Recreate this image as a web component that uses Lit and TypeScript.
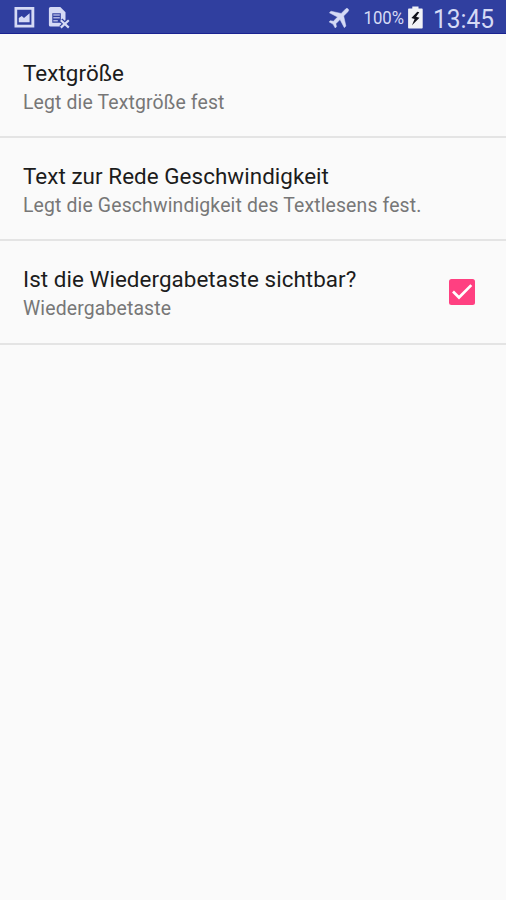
import { LitElement, html, css, svg } from "lit";
import { customElement, property } from "lit/decorators.js";

@customElement("status-bar")
class StatusBar extends LitElement {
  static styles = css`
    :host {
      display: flex;
      box-sizing: border-box;
      height: 34px;
      background: #303f9f;
      border-bottom: 1px solid #1a2391;
      font-family: Roboto, "Noto Sans", sans-serif;
    }
    svg { display: block; width: 100%; height: 33px; }
    .small { font-size: 17.5px; }
    .clock { font-size: 26px; }
  `;
  render() {
    return html`<svg viewBox="0 0 506 33" fill="#d5daf5">
      ${svg`
      <path fill-rule="evenodd" d="M14.500 7h19.800v20.500H14.500z M17.200 9.800v15h14.200v-15z"/>
      <path d="M18.800 22.300v-4.200l3-2.200 2.200 2 5.600-4.600v9z"/>
      <path fill-rule="evenodd" d="M50.500 7h9.800l5.200 5.200v9h-3.200v5.300H50.500a1.600 1.600 0 0 1-1.600-1.600V8.600A1.600 1.600 0 0 1 50.500 7z M52.300 13.300v9.500h8.500v-9.500z"/>
      <path d="M53.300 14.200h6.500v1.500h-6.500z M53.300 17h6.500v1.500h-6.500z M53.300 20h4.500v1.500h-4.500z" opacity=".75"/>
      <path d="M60.800 20.200l8 7.400M68.800 20.200l-8 7.400" fill="none" stroke="#303f9f" stroke-width="4.500"/>
      <path d="M60.800 20.200l8 7.400M68.800 20.200l-8 7.400" fill="none" stroke="#d5daf5" stroke-width="2.200"/>
      <g transform="translate(340.600 16.500) rotate(45) scale(1.170)">
        <path stroke="#d5daf5" stroke-width=".4" d="M9 4.500V2.600L1.500-2.200v-5.400a1.500 1.500 0 0 0-3 0v5.400L-9 2.600v1.900l7.500-2.300v5L-3.700 8.700v1.500L0 9.200l3.700 1V8.700L1.500 7.200v-5z"/>
      </g>
      <text class="small" x="363.500" y="24" textLength="40.500" lengthAdjust="spacingAndGlyphs">100%</text>
      <path fill="#f2f3f7" d="M412.300 6.500h6.200v2h3.200c.6 0 1 .4 1 1v18c0 .6-.4 1-1 1h-12.600c-.6 0-1-.4-1-1v-18c0-.6.400-1 1-1h3.200z"/>
      <path fill="#11121b" d="M417.300 11.800l-5.900 6.100 3.200 1.200-2.600 6.100 7.500-7.400-3.400-1.100 3.200-4.400z"/>
      <text class="clock" x="433" y="27.500" textLength="61" lengthAdjust="spacingAndGlyphs">13:45</text>`}
    </svg>`;
  }
}

@customElement("preference-row")
class PreferenceRow extends LitElement {
  @property() heading = "";
  @property() summary = "";
  @property({ type: Boolean }) checked = false;
  static styles = css`
    :host {
      display: flex;
      box-sizing: border-box;
      height: 103.400px;
      align-items: center;
      justify-content: space-between;
      padding: 0 31px 0 23px;
      border-bottom: 2px solid #e4e4e4;
    }
    .texts { align-self: flex-start; white-space: nowrap; padding-top: 24.250px; }
    .heading { font-size: 22.400px; line-height: 29px; color: #1c1c1c; letter-spacing: 0.060px; }
    .summary { font-size: 19.400px; line-height: 29px; color: #777; letter-spacing: 0.150px; }
    svg { display: block; width: 26px; height: 26px; }
  `;
  render() {
    return html`
      <div class="texts">
        <div class="heading">${this.heading}</div>
        <div class="summary">${this.summary}</div>
      </div>
      ${this.checked
        ? html`<svg viewBox="0 0 26 26">
            <rect width="26" height="26" rx="2.500" fill="#ff4081" />
            <path d="M4 12.500l6 6L22.300 6.100" fill="none" stroke="#fff" stroke-width="2.700" />
          </svg>`
        : ""}
    `;
  }
}

@customElement("app-root")
class AppRoot extends LitElement {
  static styles = css`
    :host {
      display: block;
      height: 900px;
      overflow: hidden;
      background: #fafafa;
      font-family: Roboto, "Noto Sans", sans-serif;
    }
    .list { padding-top: 0.400px; }
  `;
  render() {
    return html`
      <status-bar></status-bar>
      <div class="list">
        <preference-row heading="Textgröße" summary="Legt die Textgröße fest"></preference-row>
        <preference-row heading="Text zur Rede Geschwindigkeit" summary="Legt die Geschwindigkeit des Textlesens fest."></preference-row>
        <preference-row heading="Ist die Wiedergabetaste sichtbar?" summary="Wiedergabetaste" checked></preference-row>
      </div>
    `;
  }
}
